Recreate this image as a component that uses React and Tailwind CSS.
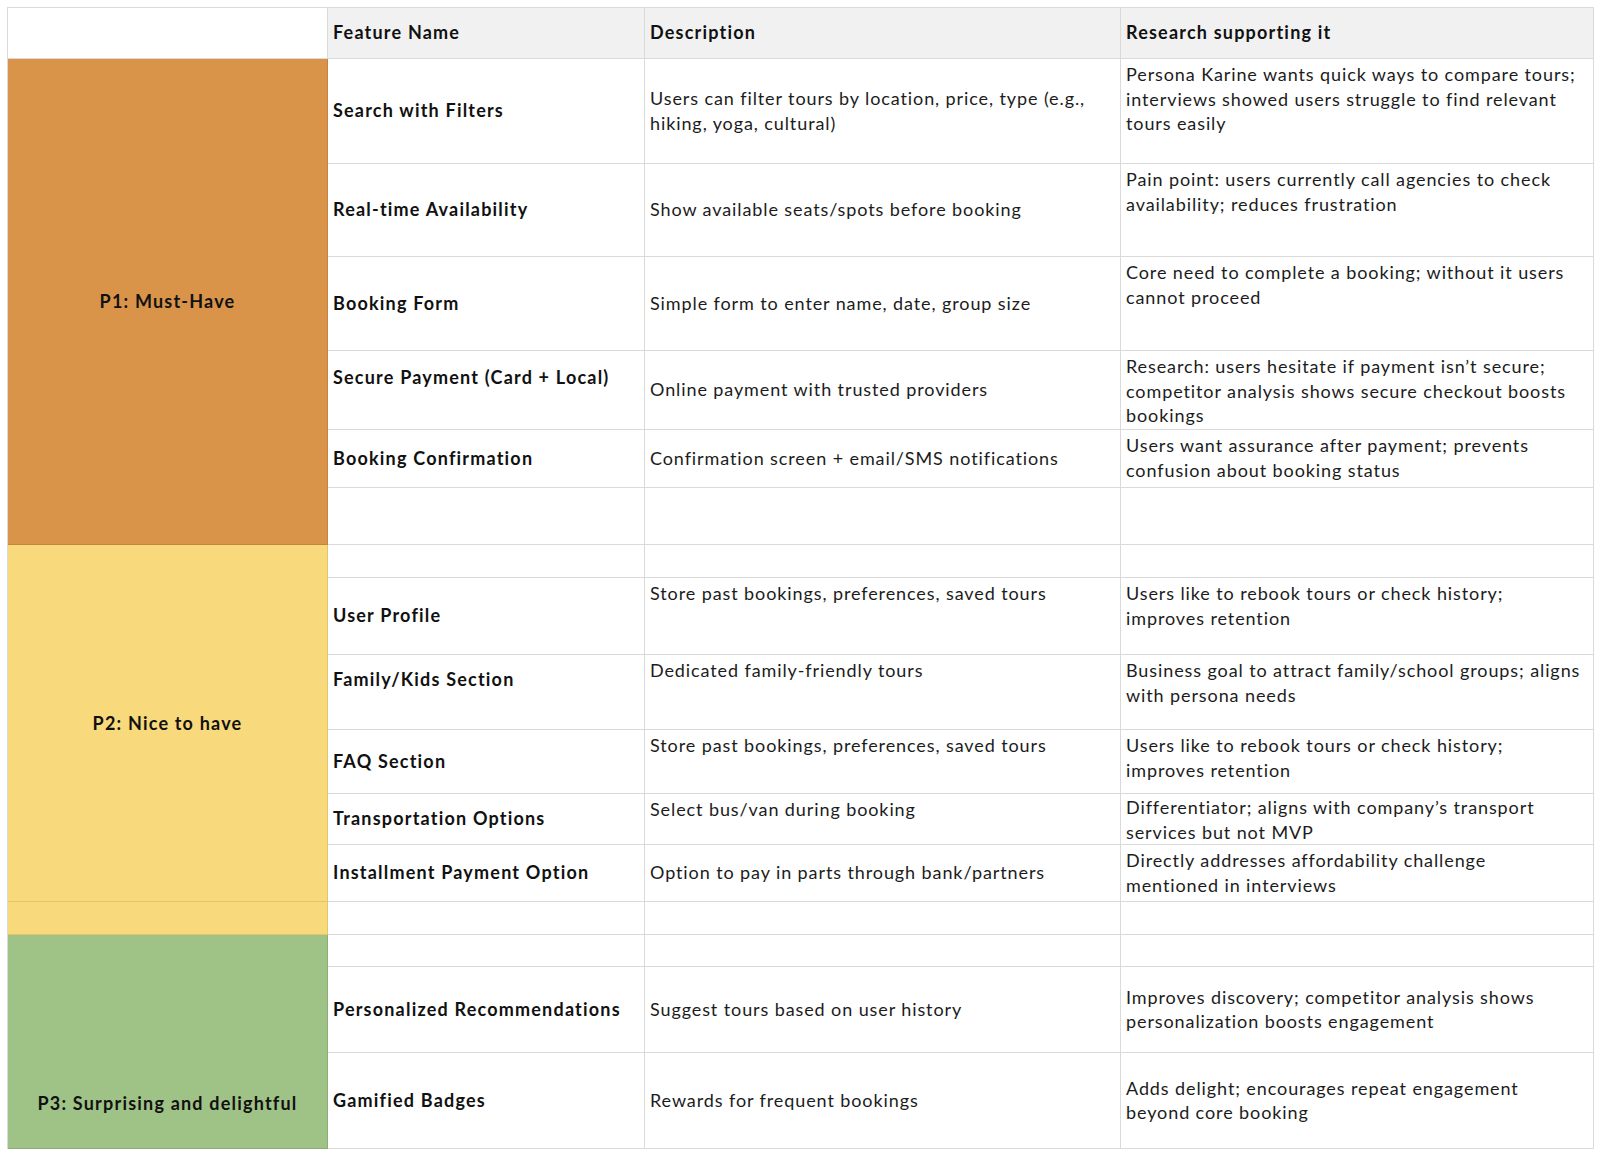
import React from "react";

const rows = [
  { h: "header", f: ["Feature Name"], d: ["Description"], r: ["Research supporting it"] },
  {
    g: "p1",
    f: ["Search with Filters"], fa: "middle",
    d: ["Users can filter tours by location, price, type (e.g.,", "hiking, yoga, cultural)"], da: "middle",
    r: ["Persona Karine wants quick ways to compare tours;", "interviews showed users struggle to find relevant", "tours easily"], ra: "top",
  },
  {
    f: ["Real-time Availability"], fa: "middle",
    d: ["Show available seats/spots before booking"], da: "middle",
    r: ["Pain point: users currently call agencies to check", "availability; reduces frustration"], ra: "top",
  },
  {
    f: ["Booking Form"], fa: "middle",
    d: ["Simple form to enter name, date, group size"], da: "middle",
    r: ["Core need to complete a booking; without it users", "cannot proceed"], ra: "top",
  },
  {
    f: ["Secure Payment (Card + Local)", ""], fa: "middle",
    d: ["Online payment with trusted providers"], da: "middle",
    r: ["Research: users hesitate if payment isn\u2019t secure;", "competitor analysis shows secure checkout boosts", "bookings"], ra: "top",
  },
  {
    f: ["Booking Confirmation"], fa: "middle",
    d: ["Confirmation screen + email/SMS notifications"], da: "middle",
    r: ["Users want assurance after payment; prevents", "confusion about booking status"], ra: "top",
  },
  { f: [], d: [], r: [] },
  { g: "p2", f: [], d: [], r: [] },
  {
    f: ["User Profile"], fa: "middle",
    d: ["Store past bookings, preferences, saved tours"], da: "top",
    r: ["Users like to rebook tours or check history;", "improves retention"], ra: "top",
  },
  {
    f: ["Family/Kids Section", ""], fa: "middle",
    d: ["Dedicated family-friendly tours"], da: "top",
    r: ["Business goal to attract family/school groups; aligns", "with persona needs"], ra: "top",
  },
  {
    f: ["FAQ Section"], fa: "middle",
    d: ["Store past bookings, preferences, saved tours"], da: "top",
    r: ["Users like to rebook tours or check history;", "improves retention"], ra: "top",
  },
  {
    f: ["Transportation Options"], fa: "middle",
    d: ["Select bus/van during booking"], da: "top",
    r: ["Differentiator; aligns with company\u2019s transport", "services but not MVP"], ra: "tight",
  },
  {
    f: ["Installment Payment Option"], fa: "middle",
    d: ["Option to pay in parts through bank/partners"], da: "middle",
    r: ["Directly addresses affordability challenge", "mentioned in interviews"], ra: "top",
  },
  { g: "p2b", f: [], d: [], r: [] },
  { g: "p3", f: [], d: [], r: [] },
  {
    f: ["Personalized Recommendations"], fa: "middle",
    d: ["Suggest tours based on user history"], da: "middle",
    r: ["Improves discovery; competitor analysis shows", "personalization boosts engagement"], ra: "middle",
  },
  {
    f: ["Gamified Badges"], fa: "middle",
    d: ["Rewards for frequent bookings"], da: "middle",
    r: ["Adds delight; encourages repeat engagement", "beyond core booking"], ra: "middle",
  },
];

function Cell({ lines, align = "middle", bold = false, header = false }) {
  const alignCls =
    align === "top"
      ? "justify-start pt-[3px]"
      : align === "tight"
      ? "justify-start pt-[1px]"
      : "justify-center pb-[1px]";
  return (
    <div
      className={`flex flex-col px-[5px] border-r border-b border-[#dadada] ${alignCls} ${
        header ? "bg-[#f1f1f1]" : "bg-white"
      } ${bold ? "font-bold tracking-[1.2px] text-[#111]" : "font-normal tracking-[0.9px]"}`}
    >
      {lines.map((l, i) => (
        <div key={i} className="whitespace-nowrap">
          {l === "" ? "\u00a0" : l}
        </div>
      ))}
    </div>
  );
}

function GroupCell({ g }) {
  if (g === "p1")
    return (
      <div className="row-span-6 flex items-center justify-center bg-[#d9944a] border-r border-b border-[#c4843e] font-bold tracking-[1.2px] text-[#111]">
        P1: Must-Have
      </div>
    );
  if (g === "p2")
    return (
      <div className="row-span-6 flex items-center justify-center bg-[#f8d97b] border-r border-b border-[#e2c46a] font-bold tracking-[1.2px] text-[#111]">
        P2: Nice to have
      </div>
    );
  if (g === "p2b")
    return <div className="bg-[#f8d97b] border-r border-b border-[#e2c46a]" />;
  if (g === "p3")
    return (
      <div className="row-span-3 flex items-end justify-center pb-[33px] bg-[#9fc386] border-r border-b border-[#8cae74] font-bold tracking-[1.2px] text-[#111]">
        P3: Surprising and delightful
      </div>
    );
  return null;
}

export default function App() {
  return (
    <div
      className="w-[1600px] h-[1152px] overflow-hidden bg-white pt-[7px] pl-[7px] text-[18px] leading-[24.5px] text-[#1c1c1c]"
      style={{ fontFamily: "Lato, 'Open Sans', sans-serif" }}
    >
      <div className="grid w-fit grid-cols-[320px_317px_476px_473px] grid-rows-[51px_105px_93px_94px_79px_58px_57px_33px_77px_75px_64px_51px_57px_33px_32px_86px_96px] border-t border-l border-[#dadada]">
        {rows.map((row, i) => (
          <React.Fragment key={i}>
            {row.h === "header" && <div className="bg-white border-r border-b border-[#dadada]" />}
            {row.g && <GroupCell g={row.g} />}
            <Cell lines={row.f} align={row.fa} bold header={row.h === "header"} />
            <Cell lines={row.d} align={row.da} bold={row.h === "header"} header={row.h === "header"} />
            <Cell lines={row.r} align={row.ra} bold={row.h === "header"} header={row.h === "header"} />
          </React.Fragment>
        ))}
      </div>
    </div>
  );
}
